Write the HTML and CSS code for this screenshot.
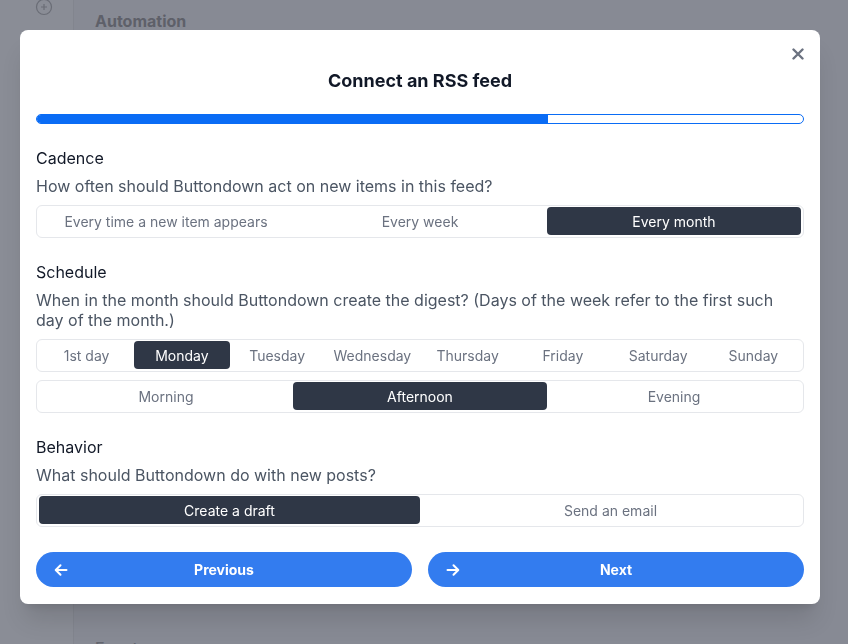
FILE: index.html
```html
<!DOCTYPE html>
<html>
<head>
<meta charset="utf-8">
<link rel="stylesheet" href="styles.css">
</head>
<body>
<div class="page">
  <aside class="sidebar">
    <svg class="plus" width="18" height="18" viewBox="0 0 18 18"><circle cx="9" cy="9" r="7.5" fill="none" stroke="#6a6d76" stroke-width="1.2"/><path d="M9 6v6M6 9h6" stroke="#6a6d76" stroke-width="1.2"/></svg>
  </aside>
  <main class="main">
    <h2 class="bg-heading">Automation</h2>
    <div class="bg-spacer"></div>
    <h2 class="bg-heading bg-events">Events</h2>
  </main>
</div>

<div class="modal">
  <button class="close" aria-label="Close">
    <svg width="12" height="12" viewBox="0 0 12 12"><path d="M1.5 1.5l9 9M10.5 1.5l-9 9" stroke="#6b7280" stroke-width="2.4" stroke-linecap="round"/></svg>
  </button>
  <h1 class="title">Connect an RSS feed</h1>
  <div class="progress"><div class="progress-fill" style="width:66.7%"></div></div>

  <section class="field">
    <div class="label">Cadence</div>
    <p class="desc">How often should Buttondown act on new items in this feed?</p>
    <div class="seg">
      <div class="seg-item">Every time a new item appears</div>
      <div class="seg-item">Every week</div>
      <div class="seg-item active">Every month</div>
    </div>
  </section>

  <section class="field">
    <div class="label">Schedule</div>
    <p class="desc">When in the month should Buttondown create the digest? (Days of the week refer to the first such day of the month.)</p>
    <div class="seg">
      <div class="seg-item">1st day</div>
      <div class="seg-item active">Monday</div>
      <div class="seg-item">Tuesday</div>
      <div class="seg-item">Wednesday</div>
      <div class="seg-item">Thursday</div>
      <div class="seg-item">Friday</div>
      <div class="seg-item">Saturday</div>
      <div class="seg-item">Sunday</div>
    </div>
    <div class="seg seg-second">
      <div class="seg-item">Morning</div>
      <div class="seg-item active">Afternoon</div>
      <div class="seg-item">Evening</div>
    </div>
  </section>

  <section class="field">
    <div class="label">Behavior</div>
    <p class="desc">What should Buttondown do with new posts?</p>
    <div class="seg">
      <div class="seg-item active">Create a draft</div>
      <div class="seg-item">Send an email</div>
    </div>
  </section>

  <div class="actions">
    <button class="btn">
      <svg class="btn-icon" width="14" height="14" viewBox="0 0 14 14"><path d="M12.5 7H1.8M6.5 2.2L1.7 7l4.8 4.8" fill="none" stroke="#fff" stroke-width="2" stroke-linecap="round" stroke-linejoin="round"/></svg>
      <span>Previous</span>
    </button>
    <button class="btn">
      <svg class="btn-icon" width="14" height="14" viewBox="0 0 14 14"><path d="M1.5 7h10.7M7.5 2.2L12.3 7l-4.8 4.8" fill="none" stroke="#fff" stroke-width="2" stroke-linecap="round" stroke-linejoin="round"/></svg>
      <span>Next</span>
    </button>
  </div>
</div>
</body>
</html>
```

FILE: styles.css
```css
* { box-sizing: border-box; }
html, body { margin: 0; padding: 0; }
body {
  font-family: Inter, "Noto Sans", "Liberation Sans", sans-serif;
  background: #878a94;
  width: 848px;
  height: 644px;
  overflow: hidden;
}
.page {
  display: flex;
  height: 644px;
}
.sidebar {
  width: 74px;
  background: #8a8d96;
  border-right: 1px solid #82858e;
  position: relative;
  padding-left: 35px;
}
.plus { margin-top: -5px; }
.main {
  flex: 1;
  padding-left: 21px;
  display: flex;
  flex-direction: column;
}
.bg-heading {
  margin: 10px 0 0;
  font-size: 16px;
  font-weight: 700;
  line-height: 22px;
  color: #5e6069;
}
.bg-spacer { flex: 1; }
.bg-events {
  margin: 0 0 -15px;
  font-weight: 500;
  color: #63666f;
}

.modal {
  position: fixed;
  top: 30px;
  left: 20px;
  width: 800px;
  height: 574px;
  background: #fff;
  border-radius: 8px;
  padding: 16px 16px 17px;
  box-shadow: 0 20px 25px -5px rgba(0,0,0,0.12), 0 8px 10px -6px rgba(0,0,0,0.1);
}
.close {
  position: absolute;
  top: 18px;
  right: 16px;
  width: 12px;
  height: 12px;
  padding: 0;
  border: 0;
  background: none;
  display: flex;
}
.close svg { display: block; }
.title {
  margin: 21px 0 0;
  text-align: center;
  font-size: 18px;
  line-height: 28px;
  font-weight: 700;
  color: #111827;
}
.progress {
  margin-top: 19px;
  height: 10px;
  border: 1px solid #0a6cf5;
  border-radius: 5px;
  overflow: hidden;
  background: #fff;
}
.progress-fill {
  height: 100%;
  background: #0a6cf5;
}
.field { margin-top: 22px; }
.label {
  font-size: 16px;
  line-height: 24px;
  color: #111827;
}
.desc {
  margin: 6px 0 0;
  font-size: 16px;
  line-height: 20px;
  color: #4b5563;
}
.seg {
  margin-top: 9px;
  display: flex;
  border: 1px solid #e5e7eb;
  border-radius: 6px;
  padding: 1px 2px 2px;
}
.seg-second { margin-top: 8px; }
.field:nth-of-type(2) .seg:first-of-type { margin-top: 8px; }
.seg-item {
  flex: 1;
  height: 28px;
  display: flex;
  align-items: center;
  justify-content: center;
  font-size: 14px;
  color: #6b7280;
  border-radius: 4px;
}
.seg-item.active {
  background: #2f3746;
  color: #fff;
}
.actions {
  margin-top: 25px;
  display: flex;
  gap: 16px;
}
.btn {
  flex: 1;
  height: 35px;
  border: 0;
  border-radius: 18px;
  background: #337cef;
  color: #fff;
  font-family: inherit;
  font-size: 14px;
  font-weight: 700;
  display: flex;
  align-items: center;
  position: relative;
  padding: 0 18px;
}
.btn span {
  flex: 1;
  text-align: center;
  margin-right: 14px;
}
.btn-icon { display: block; }
```
